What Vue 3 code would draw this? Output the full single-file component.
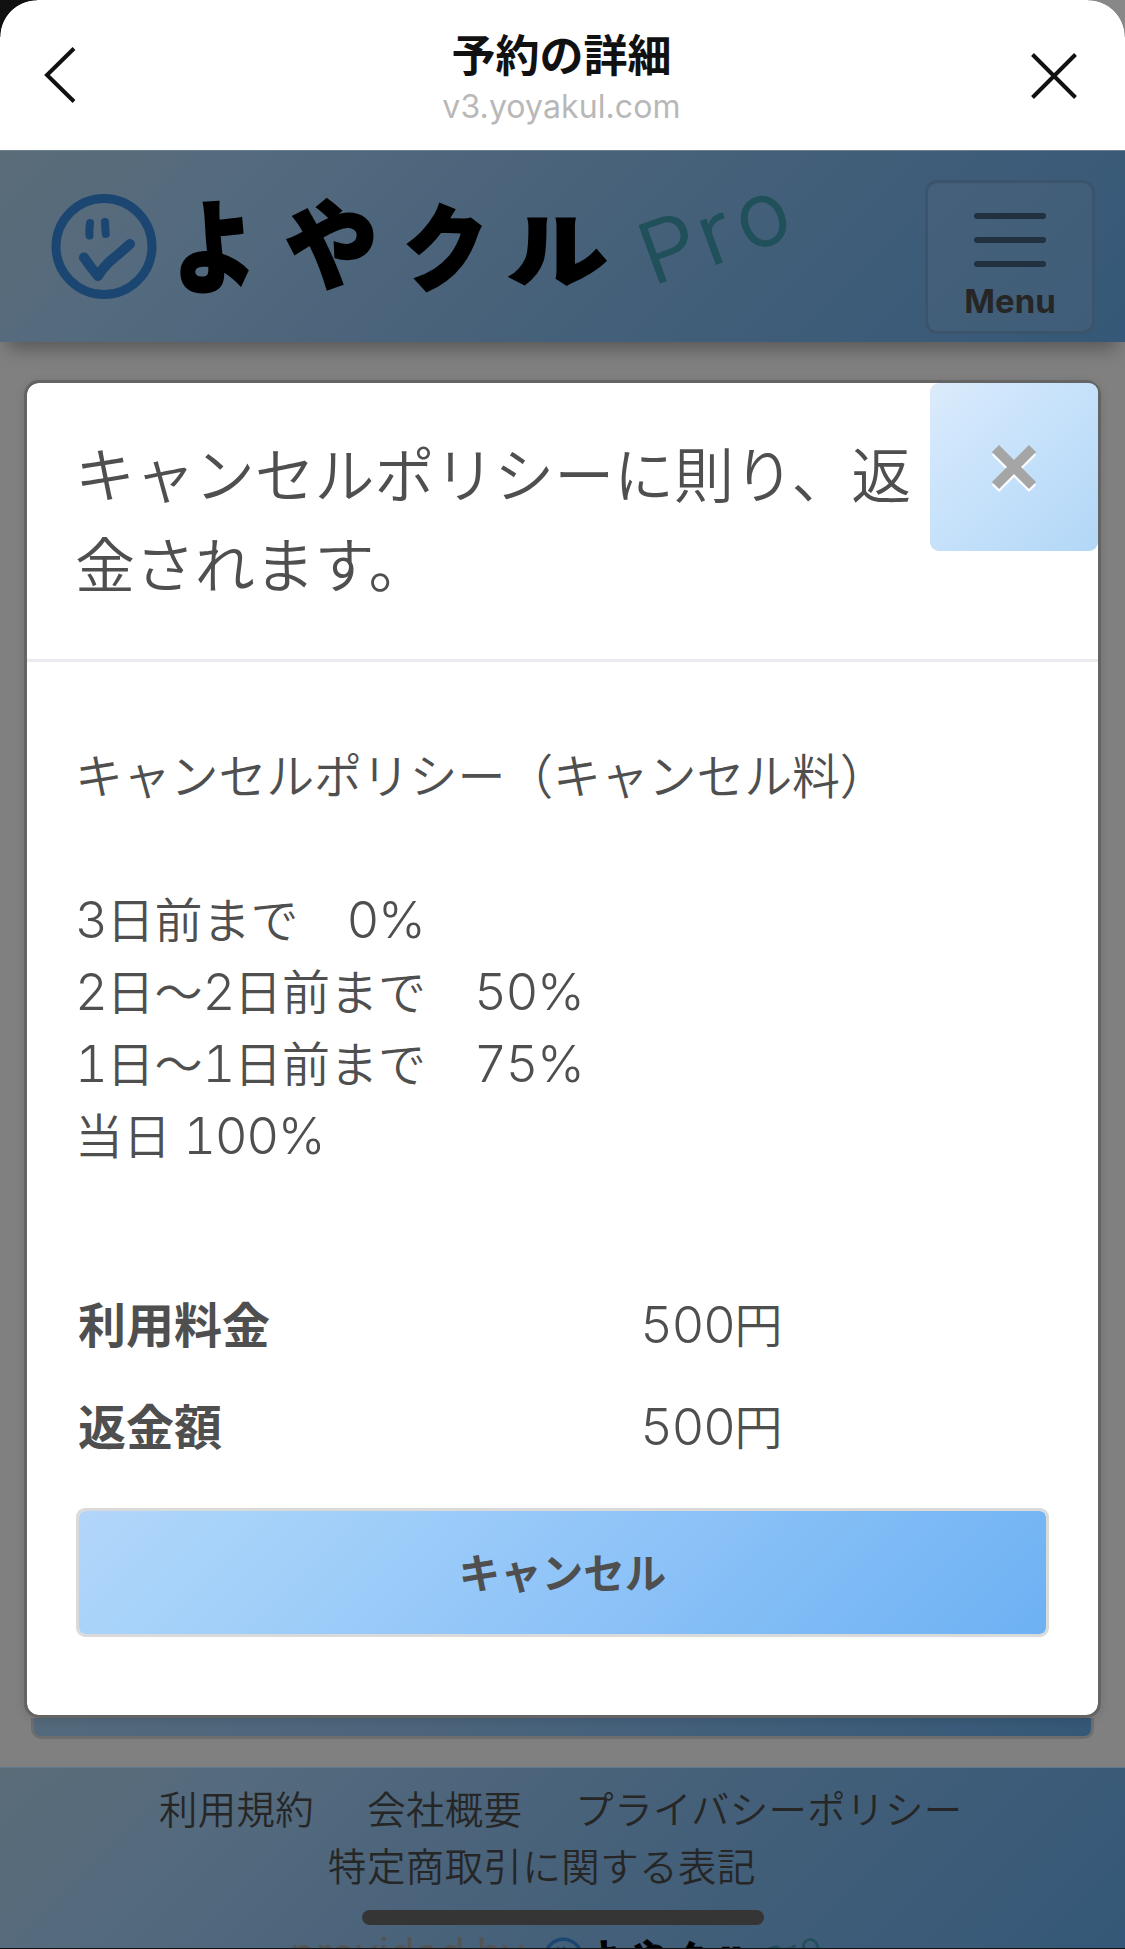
<script setup>
const policies = [
  { label: '3日前まで　', rate: '0%' },
  { label: '2日〜2日前まで　', rate: '50%' },
  { label: '1日〜1日前まで　', rate: '75%' },
  { label: '当日', rate: ' 100%' },
]
const split = (s) => s.split(/(\d+)/).filter(Boolean)
const fees = [
  { name: '利用料金', amount: '500' },
  { name: '返金額', amount: '500' },
]
</script>

<template>
  <div class="screen">
    <header class="titlebar">
      <svg class="back" width="36" height="60" viewBox="0 0 36 60"><path d="M32 3.5 5 30l27 26.500" /></svg>
      <div class="titles">
        <h1>予約の詳細</h1>
        <p>v3.yoyakul.com</p>
      </div>
      <svg class="dismiss" width="48" height="48" viewBox="0 0 48 48"><path d="M2.500 2.500l43 43M45.500 2.500l-43 43" /></svg>
    </header>

    <nav class="navbar">
      <svg class="logo" width="746" height="112" viewBox="46 190 746 112">
        <symbol id="brand" viewBox="46 190 746 112" overflow="visible">
          <g fill="none" stroke="#1b4671" stroke-linecap="round" stroke-linejoin="round">
            <circle cx="104" cy="246.500" r="48" stroke-width="9" />
            <path d="M90 223q-1 6-.5 12.500M105 222q.2 7 .8 12" stroke-width="8" />
            <path d="M84 257.500q6 9 14 18.500Q104 266 112 259.500T130 244" stroke-width="10" />
          </g>
          <g class="brand-kana">
            <text transform="translate(174 287) rotate(-3) scale(.84 1.02)">よ</text>
            <text transform="translate(288 285) rotate(-4) scale(.93 .98)">や</text>
            <text transform="translate(402 283) rotate(2) scale(.84 .96)">ク</text>
            <text transform="translate(507 280) scale(1.010 .8)">ル</text>
          </g>
          <g class="brand-pro">
            <text transform="translate(652 286) rotate(-20) scale(1.080 1)">P</text>
            <text transform="translate(709 267) rotate(-20) scale(1.100 1)">r</text>
            <text transform="translate(747 253) rotate(-20) scale(1.060)">o</text>
          </g>
        </symbol>
        <use href="#brand" x="46" y="190" width="746" height="112" />
      </svg>
      <button class="menu">
        <i></i><i></i><i></i>
        <span>Menu</span>
      </button>
    </nav>

    <main>
      <section class="modal">
        <div class="modal-head">
          <h2>キャンセルポリシーに則り、返金されます。</h2>
          <button class="close" aria-label="close">
            <svg width="50" height="54" viewBox="0 0 50 54">
              <path d="M6.500 11.500l37 37M43.500 11.500l-37 37" stroke="#fff" />
              <path d="M6.500 8.500l37 37M43.500 8.500l-37 37" stroke="#a5a5a5" />
            </svg>
          </button>
        </div>
        <div class="modal-body">
          <p class="policy-title">キャンセルポリシー（キャンセル料）</p>
          <ul>
            <li v-for="p in policies" :key="p.label"><template v-for="(s, i) in split(p.label)" :key="i"><span v-if="/\d/.test(s)" class="num">{{ s }}</span><template v-else>{{ s }}</template></template><span class="num">{{ p.rate }}</span></li>
          </ul>
          <dl>
            <div v-for="f in fees" :key="f.name">
              <dt>{{ f.name }}</dt>
              <dd><span class="num">{{ f.amount }}</span>円</dd>
            </div>
          </dl>
          <button class="cancel">キャンセル</button>
        </div>
      </section>
      <div class="under"></div>
    </main>

    <footer>
      <div class="links"><a>利用規約</a><a>会社概要</a><a>プライバシーポリシー</a></div>
      <div class="links second"><a>特定商取引に関する表記</a></div>
      <div class="indicator"></div>
      <div class="provided">
        <span>provided by</span>
        <svg width="281" height="42" viewBox="0 0 281 42"><use href="#brand" width="281" height="42" /></svg>
      </div>
    </footer>
  </div>
</template>

<style>
body { margin: 0; }
</style>

<style scoped>
* { box-sizing: border-box; margin: 0; padding: 0; }
.screen {
  width: 1125px;
  height: 1949px;
  overflow: hidden;
  background: #808080;
  border-bottom: 1px solid #111;
  color: #4f4f4f;
  font-family: "Noto Sans CJK JP", sans-serif;
  font-weight: 350;
  display: flex;
  flex-direction: column;
}
button { font: inherit; color: inherit; }
.titlebar {
  height: 150px;
  flex: none;
  display: flex;
  align-items: flex-start;
  justify-content: space-between;
  background:
    radial-gradient(ellipse 37px 37px at 37px 37px, #fff 98%, #111 100%) 0 0 / 37px 37px no-repeat,
    radial-gradient(ellipse 37px 37px at 0 37px, #fff 98%, #888 100%) 100% 0 / 37px 37px no-repeat,
    linear-gradient(#fff, #fff) 37px 0 / 1051px 37px no-repeat,
    linear-gradient(#fff, #fff) 0 37px / 100% 113px no-repeat;
}
.titlebar svg { fill: none; stroke: #111; stroke-width: 4; }
.back { margin: 45px 0 0 42px; }
.dismiss { margin: 52px 47px 0 0; }
.titles { text-align: center; margin-top: 21px; padding-left: 15px; }
.titles h1 { font-size: 44px; line-height: 64px; font-weight: 700; color: #111; }
.titles p { font: 400 32px/44px Inter, sans-serif; color: #b8b8b8; letter-spacing: .1px; }
.navbar {
  height: 192px;
  flex: none;
  display: flex;
  justify-content: space-between;
  align-items: flex-start;
  padding: 30px 30px 0 46px;
  background: linear-gradient(135deg, #5a6c78 0%, #546a7e 20%, #456079 55%, #355878 100%);
  border-top: 1px solid #6b8190;
  box-shadow: 0 14px 18px -8px rgba(0, 0, 0, .34);
  position: relative;
}
.logo { margin-top: 9px; overflow: visible; }
.brand-kana { font: 900 100px "Noto Sans CJK JP", sans-serif; fill: #000; stroke: #000; stroke-width: 2; }
.brand-pro { font: 300 84px Inter, sans-serif; fill: #20505a; stroke: #20505a; stroke-width: 1; stroke-linejoin: round; }
.menu {
  width: 170px;
  height: 154px;
  margin-top: -1px;
  border: 3px solid #3b546b;
  border-radius: 12px;
  background: linear-gradient(135deg, #45607a, #3f5d79);
  display: flex;
  flex-direction: column;
  align-items: center;
  padding-top: 30px;
}
.menu i { width: 72px; height: 6px; border-radius: 3px; background: #22303f; margin-bottom: 18px; flex: none; }
.menu span { font: 700 33px/40px Inter, sans-serif; color: #262626; margin-top: -4px; }
main { height: 1425px; flex: none; padding: 38px 24px 0; }
.modal {
  width: 1077px;
  height: 1338px;
  border: 3px solid #646464;
  border-radius: 15px;
  background: #fff;
  background-clip: padding-box;
  box-shadow: 0 2px 10px rgba(0, 0, 0, .12);
  position: relative;
}
.modal-head { height: 279px; border-bottom: 3px solid #e9ebee; display: flex; }
.modal-head h2 { width: 855px; margin-left: 48px; padding-top: 44px; font-weight: 350; font-size: 60px; line-height: 90px; letter-spacing: -.1px; flex: none; }
.close {
  width: 168px;
  height: 168px;
  flex: none;
  border: 0;
  border-radius: 9px;
  background: linear-gradient(135deg, #dcebfb, #cfe6fc 25%, #b2d7f7);
  display: flex;
  align-items: center;
  justify-content: center;
}
.close svg { fill: none; stroke-width: 10; }
.modal-body { padding: 75px 48px 0; font-size: 48px; line-height: 72px; }
.policy-title { margin-bottom: 72px; white-space: nowrap; letter-spacing: -.2px; }
ul { list-style: none; }
li { white-space: pre; height: 72px; }
.num { font: 300 51px/1 Inter, sans-serif; font-variant-numeric: tabular-nums; letter-spacing: -1.500px; }
dl { margin-top: 103px; }
dl div { height: 102px; padding: 14px 0 0 3px; display: flex; }
dt { width: 562px; font-weight: 700; }
.cancel {
  display: block;
  width: 973px;
  height: 129px;
  margin: 32px 0 0 1px;
  padding-bottom: 3px;
  border: 3px solid #dadada;
  border-radius: 9px;
  background: linear-gradient(135deg, #b2d6fa, #a4d1f9 20%, #91c5f8 50%, #6db1f3);
  background-clip: padding-box;
  font-size: 41.500px;
  font-weight: 700;
  line-height: 60px;
}
.under {
  height: 21px;
  margin: 0 7px;
  border: 3px solid #6e6e6e;
  border-top: 0;
  border-radius: 0 0 10px 10px;
  background: linear-gradient(135deg, #546a7c, #4b647c 40%, #355878);
}
footer {
  height: 182px;
  flex: none;
  padding-top: 11px;
  color: #262626;
  background: linear-gradient(135deg, #5a6c78 0%, #546a7e 20%, #456079 55%, #355878 100%);
  border-top: 1px solid #61798c;
}
.links { display: flex; gap: 53px; padding-left: 159px; height: 57px; font-size: 38.400px; line-height: 57px; letter-spacing: .4px; white-space: nowrap; }
.links.second { padding-left: 328px; letter-spacing: .5px; }
.indicator { width: 402px; height: 15px; border-radius: 8px; background: #353535; margin: 17px 0 0 362px; }
.provided { display: flex; margin: 11px 0 0 290px; color: #555; }
.provided span { width: 251px; font: 400 42px/34px Inter, sans-serif; white-space: nowrap; }
.provided svg { flex: none; }
</style>
